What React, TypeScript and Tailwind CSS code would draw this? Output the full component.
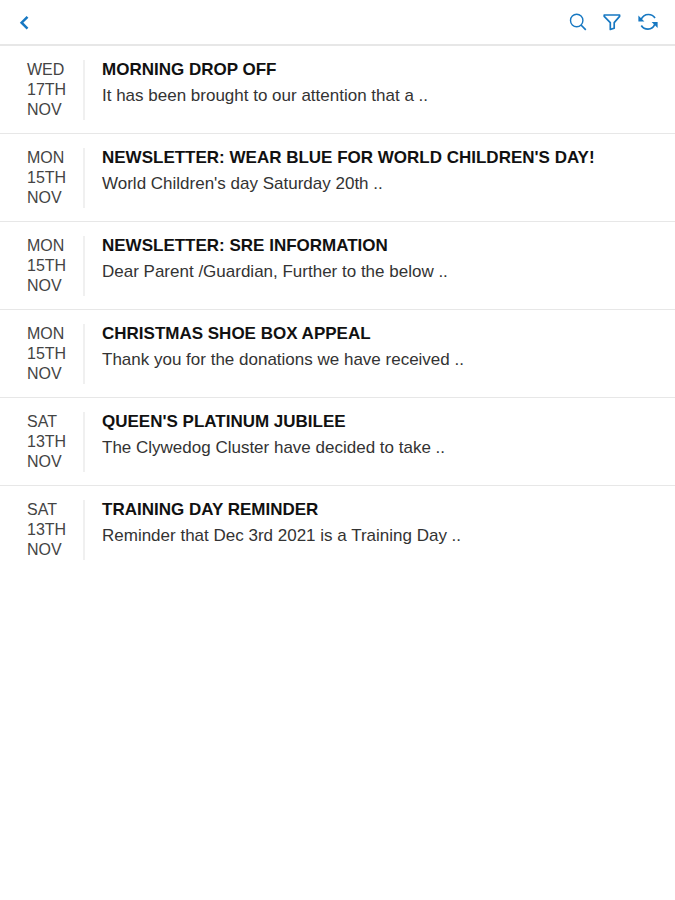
interface Message {
  id: number;
  day: string;
  date: string;
  month: string;
  title: string;
  preview: string;
}

const messages: Message[] = [
  {
    id: 1,
    day: "WED",
    date: "17TH",
    month: "NOV",
    title: "MORNING DROP OFF",
    preview: "It has been brought to our attention that a ..",
  },
  {
    id: 2,
    day: "MON",
    date: "15TH",
    month: "NOV",
    title: "NEWSLETTER: WEAR BLUE FOR WORLD CHILDREN'S DAY!",
    preview: "World Children's day Saturday 20th ..",
  },
  {
    id: 3,
    day: "MON",
    date: "15TH",
    month: "NOV",
    title: "NEWSLETTER: SRE INFORMATION",
    preview: "Dear Parent /Guardian, Further to the below ..",
  },
  {
    id: 4,
    day: "MON",
    date: "15TH",
    month: "NOV",
    title: "CHRISTMAS SHOE BOX APPEAL",
    preview: "Thank you for the donations we have received ..",
  },
  {
    id: 5,
    day: "SAT",
    date: "13TH",
    month: "NOV",
    title: "QUEEN'S PLATINUM JUBILEE",
    preview: "The Clywedog Cluster have decided to take ..",
  },
  {
    id: 6,
    day: "SAT",
    date: "13TH",
    month: "NOV",
    title: "TRAINING DAY REMINDER",
    preview: "Reminder that Dec 3rd 2021 is a Training Day ..",
  },
];

function BackIcon() {
  return (
    <svg viewBox="0 0 16 16" className="h-4 w-4" fill="none" stroke="currentColor" strokeWidth="2.5">
      <path d="M11.5 2.8 5.6 8.7l5.9 5.9" />
    </svg>
  );
}

function SearchIcon() {
  return (
    <svg viewBox="0 0 20 20" className="h-5 w-5" fill="none" stroke="currentColor" strokeWidth="1.4">
      <circle cx="8.7" cy="8.5" r="6.2" />
      <path d="m13 13 4.8 4.8" strokeWidth="1.7" />
    </svg>
  );
}

function FilterIcon() {
  return (
    <svg
      viewBox="1 0 20 20"
      className="h-5 w-5"
      fill="none"
      stroke="currentColor"
      strokeWidth="1.7"
      strokeLinejoin="round"
    >
      <path d="M2.2 3h15.4v1.4L12.2 10.6v5.6l-3.9 1.2v-6.8L2.2 4.4z" />
    </svg>
  );
}

function RefreshIcon() {
  return (
    <svg viewBox="0 0 20 20" className="h-5 w-5" fill="none" stroke="currentColor" strokeWidth="1.7">
      <path d="M3 7.8C4.3 4.6 7 2.5 10.4 2.5c2.9 0 5.2 1.3 6.6 3.5" />
      <path d="M17 11.8c-1.2 3.2-3.7 5.3-7 5.3-2.9 0-5.3-1.3-6.7-3.6" />
      <path d="M.4 3.6v6h6z" fill="currentColor" stroke="none" />
      <path d="M19.6 16v-6h-6z" fill="currentColor" stroke="none" />
    </svg>
  );
}

function MessageRow({ message }: { message: Message }) {
  return (
    <li className="border-b border-[#e7e7e7] last:border-b-0">
      <a href={`#message-${message.id}`} className="flex pt-3.5 pr-4 pb-[13px] pl-[27px]">
        <div className="w-[58px] shrink-0 border-r-2 border-[#f0f0f0] text-base leading-5 text-[#444]">
          <div>{message.day}</div>
          <div>{message.date}</div>
          <div>{message.month}</div>
        </div>
        <div className="min-w-0 flex-1 pl-[17px]">
          <h2 className="text-[17px] leading-5 font-bold text-[#111]">{message.title}</h2>
          <p className="mt-1 text-[17px] leading-6 text-[#333]">{message.preview}</p>
        </div>
      </a>
    </li>
  );
}

export default function App() {
  return (
    <div className="min-h-screen bg-white font-['Liberation_Sans',Arial,sans-serif]">
      <header className="flex h-[46px] items-center justify-between border-b-2 border-[#e7e7e7] pr-[17px] pl-4 text-[#1778c2]">
        <button type="button" aria-label="Back">
          <BackIcon />
        </button>
        <div className="flex items-center gap-[15px]">
          <button type="button" aria-label="Search">
            <SearchIcon />
          </button>
          <button type="button" aria-label="Filter">
            <FilterIcon />
          </button>
          <button type="button" aria-label="Refresh">
            <RefreshIcon />
          </button>
        </div>
      </header>
      <main>
        <ul>
          {messages.map((message) => (
            <MessageRow key={message.id} message={message} />
          ))}
        </ul>
      </main>
    </div>
  );
}
